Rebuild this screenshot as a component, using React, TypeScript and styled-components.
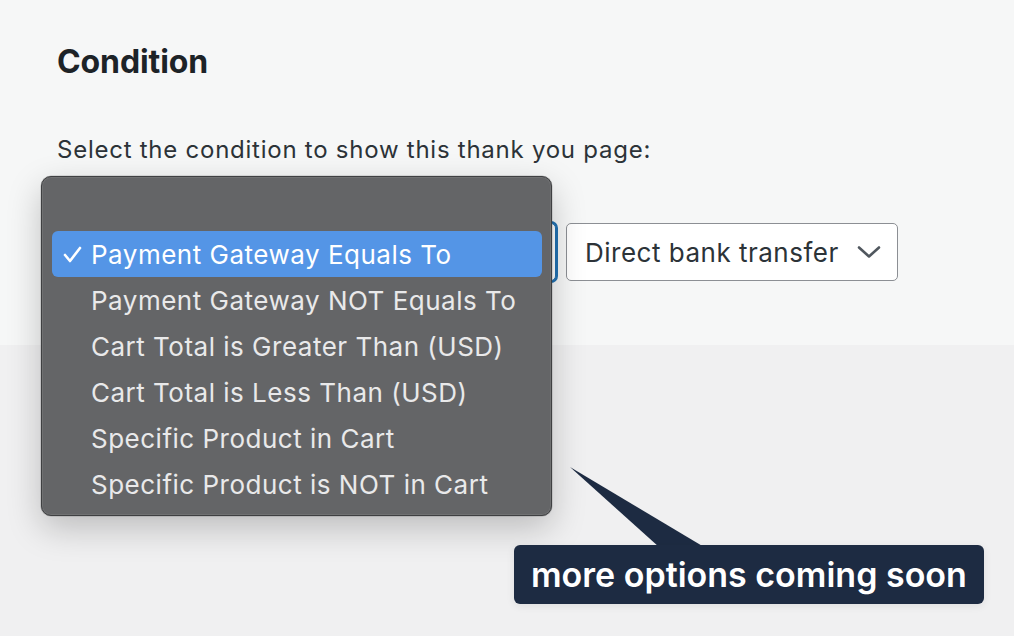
import React from "react";
import styled, { createGlobalStyle } from "styled-components";

const Global = createGlobalStyle`
  html, body { margin: 0; padding: 0; }
  body {
    font-family: Inter, "Noto Sans", "Liberation Sans", sans-serif;
    background: #f0f0f1;
    -webkit-font-smoothing: antialiased;
  }
  * { box-sizing: border-box; }
`;

const Page = styled.div`
  position: relative;
  width: 1014px;
  height: 636px;
  overflow: hidden;
  background: #f0f0f1;
  display: flex;
  flex-direction: column;
`;

const TopSection = styled.section`
  height: 345px;
  background: #f6f7f7;
  padding: 42px 57px 0;
  display: flex;
  flex-direction: column;
`;

const Heading = styled.h2`
  margin: 0;
  font-size: 32px;
  line-height: 40px;
  font-weight: 700;
  color: #1d2327;
  letter-spacing: -0.1px;
`;

const Description = styled.p`
  margin: 52px 0 0;
  font-size: 24px;
  line-height: 32px;
  font-weight: 400;
  color: #2c3338;
  letter-spacing: 0.75px;
`;

const SelectRow = styled.div`
  position: relative;
  margin-top: 57px;
  display: flex;
  align-items: center;
  gap: 10px;
`;

const Select = styled.div<{ $focused?: boolean; $width?: number }>`
  height: 58px;
  width: ${(p) => (p.$width ? `${p.$width}px` : "auto")};
  display: flex;
  align-items: center;
  gap: 18px;
  padding: 0 16px 0 18px;
  background: #fff;
  border: 1px solid ${(p) => (p.$focused ? "#2271b1" : "#8c8f94")};
  box-shadow: ${(p) => (p.$focused ? "0 0 0 2px #2271b1" : "none")};
  border-radius: 5px;
  font-size: 26px;
  letter-spacing: 0.5px;
  color: #2c3338;
`;

const Chevron = () => (
  <svg width="24" height="14" viewBox="0 0 24 14" fill="none">
    <path d="M2 2.5 L12 11.5 L22 2.5" stroke="#50575e" strokeWidth="2.6" strokeLinecap="round" strokeLinejoin="round" />
  </svg>
);

const Menu = styled.ul`
  position: absolute;
  left: -16px;
  top: -47px;
  width: 511px;
  height: 340px;
  margin: 0;
  padding: 54px 9px 0 10px;
  list-style: none;
  background: #646567;
  border: 1px solid #3f4042;
  border-radius: 10px;
  box-shadow: 0 12px 34px rgba(0, 0, 0, 0.22), 0 0 0 0.5px rgba(0, 0, 0, 0.2),
    inset 0 0 0 1px rgba(255, 255, 255, 0.08);
  z-index: 2;
`;

const MenuItem = styled.li<{ $active?: boolean }>`
  height: 46px;
  display: flex;
  align-items: center;
  padding-left: 11px;
  border-radius: 6px;
  background: ${(p) => (p.$active ? "#5495e6" : "transparent")};
  color: ${(p) => (p.$active ? "#ffffff" : "#e9e9ea")};
  font-size: 26px;
  letter-spacing: 0.5px;
  white-space: nowrap;
`;

const Check = styled.span<{ $visible?: boolean }>`
  width: 28px;
  flex: none;
  display: inline-flex;
  visibility: ${(p) => (p.$visible ? "visible" : "hidden")};
`;

const CheckIcon = () => (
  <svg width="19" height="17" viewBox="0 0 19 17" fill="none">
    <path d="M2 9 L7 15 L17 2" stroke="#fff" strokeWidth="2.6" strokeLinecap="round" strokeLinejoin="round" />
  </svg>
);

const Callout = styled.div`
  position: absolute;
  left: 514px;
  top: 545px;
  height: 59px;
  padding: 0 17px;
  display: flex;
  align-items: center;
  background: #1d2b42;
  border-radius: 6px;
  color: #fff;
  font-size: 34px;
  font-weight: 600;
  letter-spacing: 0px;
  white-space: nowrap;
  box-shadow: 0 2px 8px rgba(0, 0, 0, 0.08);
  z-index: 3;
`;

const Pointer = styled.svg`
  position: absolute;
  left: 570px;
  top: 467px;
  z-index: 3;
`;

const options = [
  "Payment Gateway Equals To",
  "Payment Gateway NOT Equals To",
  "Cart Total is Greater Than (USD)",
  "Cart Total is Less Than (USD)",
  "Specific Product in Cart",
  "Specific Product is NOT in Cart",
];

export default function App() {
  return (
    <>
      <Global />
      <Page>
        <TopSection>
          <Heading>Condition</Heading>
          <Description>Select the condition to show this thank you page:</Description>
          <SelectRow>
            <Select $focused $width={499} aria-label="Payment Gateway Equals To" />
            <Select>
              Direct bank transfer
              <Chevron />
            </Select>
            <Menu>
              {options.map((o, i) => (
                <MenuItem key={o} $active={i === 0}>
                  <Check $visible={i === 0}>
                    <CheckIcon />
                  </Check>
                  {o}
                </MenuItem>
              ))}
            </Menu>
          </SelectRow>
        </TopSection>
        <Pointer width="136" height="82" viewBox="0 0 136 82">
          <polygon points="0,0 89,80 134,80" fill="#1d2b42" />
        </Pointer>
        <Callout>more options coming soon</Callout>
      </Page>
    </>
  );
}
